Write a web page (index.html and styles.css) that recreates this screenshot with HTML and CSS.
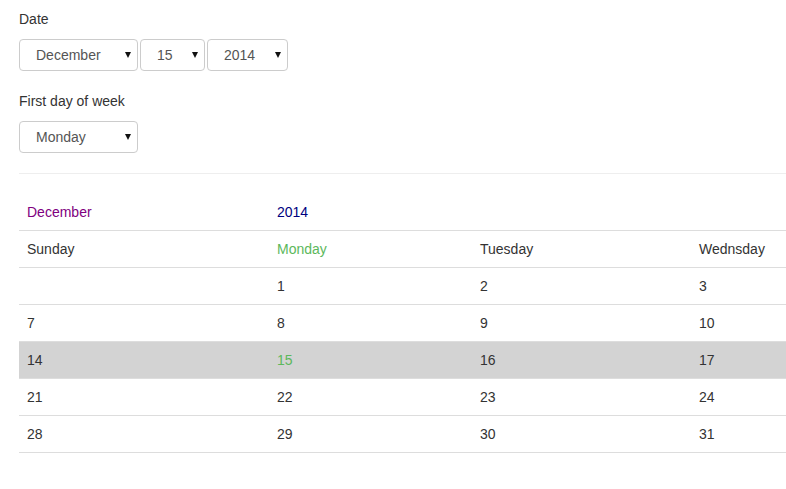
FILE: index.html
```html
<!DOCTYPE html>
<html lang="en">
<head>
    <meta charset="UTF-8">
    <meta name="viewport" content="width=device-width, initial-scale=1.0">
    <title>Calendar</title>
    <link rel="stylesheet" href="styles.css">
</head>
<body>

    <div class="page">
        <div class="form-group">
            <label>Date</label>
            <div class="select-row">
                <span class="select-wrap month">
                    <select><option>December</option></select>
                </span>
                <span class="select-wrap day">
                    <select><option>15</option></select>
                </span>
                <span class="select-wrap year">
                    <select><option>2014</option></select>
                </span>
            </div>
        </div>

        <div class="form-group">
            <label>First day of week</label>
            <div class="select-row">
                <span class="select-wrap month">
                    <select><option>Monday</option></select>
                </span>
            </div>
        </div>

        <hr>

        <table class="calendar">
            <colgroup>
                <col style="width: 250px">
                <col style="width: 203px">
                <col style="width: 219px">
                <col style="width: 300px">
            </colgroup>
            <tr class="title-row">
                <td class="month-name">December</td>
                <td class="year-name">2014</td>
                <td></td><td></td>
            </tr>
            <tr>
                <td>Sunday</td>
                <td class="current">Monday</td>
                <td>Tuesday</td>
                <td>Wednsday</td>
            </tr>
            <tr>
                <td></td><td>1</td><td>2</td><td>3</td>
            </tr>
            <tr>
                <td>7</td><td>8</td><td>9</td><td>10</td>
            </tr>
            <tr class="selected">
                <td>14</td><td class="current">15</td><td>16</td><td>17</td>
            </tr>
            <tr>
                <td>21</td><td>22</td><td>23</td><td>24</td>
            </tr>
            <tr>
                <td>28</td><td>29</td><td>30</td><td>31</td>
            </tr>
        </table>
    </div>

</body>
</html>
```

FILE: styles.css
```css
html, body {
    margin: 0;
    padding: 0;
}
body {
    font-family: "Liberation Sans", Arial, sans-serif;
    font-size: 14px;
    line-height: 20px;
    color: #333;
    overflow: hidden;
}
.page {
    padding: 9px 0 0 19px;
    overflow: hidden;
}
.form-group {
    margin-bottom: 20px;
}
label {
    display: block;
    margin-bottom: 10px;
}
.select-row {
    display: flex;
    gap: 2px;
}
.select-wrap {
    position: relative;
    display: block;
}
.select-wrap select {
    appearance: none;
    -webkit-appearance: none;
    display: block;
    width: 100%;
    height: 32px;
    padding: 0 0 0 16px;
    border: 1px solid #ccc;
    border-radius: 4px;
    background: #fff;
    font-family: inherit;
    font-size: 14px;
    color: #555;
}
.select-wrap::after {
    content: "";
    position: absolute;
    right: 7px;
    top: 13px;
    border-left: 3px solid transparent;
    border-right: 3px solid transparent;
    border-top: 6px solid #111;
    pointer-events: none;
}
.month {
    width: 119px;
}
.day {
    width: 65px;
}
.year {
    width: 81px;
}
hr {
    margin: 0 0 20px 0;
    border: 0;
    border-top: 1px solid #eee;
    width: 1200px;
}
.calendar {
    border-collapse: collapse;
    table-layout: fixed;
    width: 972px;
}
.calendar td {
    padding: 8px;
    border-top: 1px solid #ddd;
    vertical-align: top;
    white-space: nowrap;
}
.calendar tr:last-child td {
    border-bottom: 1px solid #ddd;
}
.title-row td {
    border-top: 0;
}
.month-name {
    color: purple;
}
.year-name {
    color: navy;
}
.current {
    color: #5cb85c;
}
.selected td {
    background: #d3d3d3;
}
```
